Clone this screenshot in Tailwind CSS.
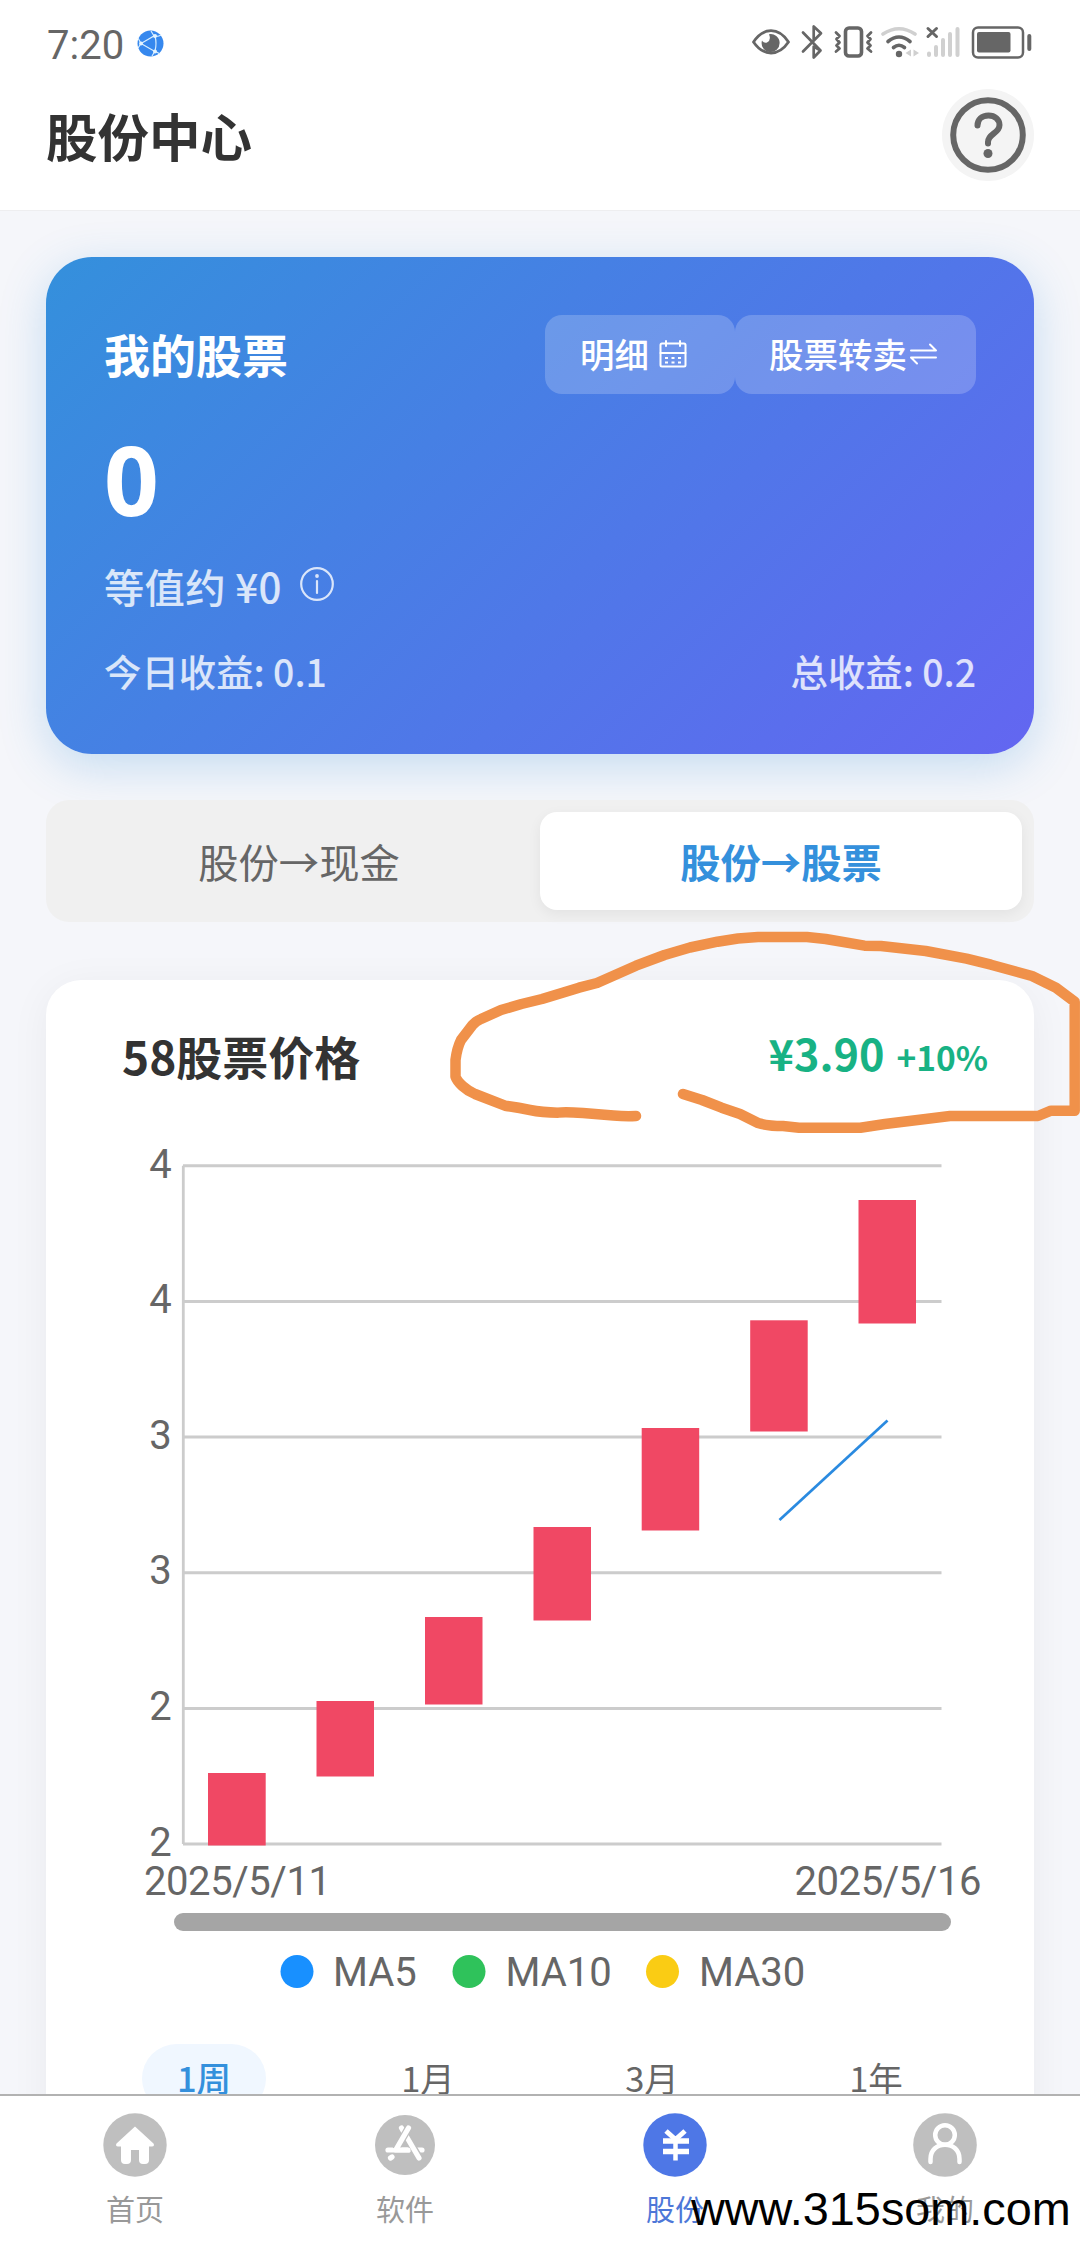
<!DOCTYPE html>
<html lang="zh-CN">
<head>
<meta charset="utf-8">
<title>股份中心</title>
<script src="https://cdn.jsdelivr.net/npm/@tailwindcss/browser@4"></script>
</head>
<body class="bg-[#f5f6fa]">
<div class="relative flex h-[2244px] w-[1080px] flex-col overflow-hidden bg-[#f5f6fa] font-['Noto_Sans_CJK_SC',sans-serif] text-[#333]">

  <header class="h-[211px] shrink-0 border-b border-[#eeeef0] bg-white">
    <div class="flex h-[84px] items-center justify-between pr-[48px] pl-[47px]">
      <div class="flex items-center gap-[13px] pt-[7px]">
        <span class="font-[Roboto,sans-serif] text-[40px] leading-[48px] text-[#666]">7:20</span>
        <svg class="-mt-[4px] h-[27px] w-[27px]" viewBox="0 0 27 27">
          <circle cx="13.5" cy="13.5" r="13" fill="#3688ee"/>
          <g stroke="#d9efff" stroke-width="1.2" fill="none"><path d="M4 13.5 17 6Q21 7 24 5M4 13.5 17 21Q20 22 23 24M18 6Q20 13.5 18 21M17 6 14 1M18 21 15 26M4 13.5 1 8M4 13.5 1 18"/></g>
          <g fill="#e4f4ff"><circle cx="4" cy="13.5" r="1.9"/><circle cx="18" cy="6" r="2"/><circle cx="18" cy="21.5" r="2"/></g>
        </svg>
      </div>
      <svg class="h-[40px] w-[280px]" viewBox="752 22 280 40" fill="none" stroke="#666" stroke-linecap="round" stroke-linejoin="round">
        <path d="M753.5 42Q761 30.700 771 30.700T788.500 42Q781 53 771 53T753.500 42Z" stroke-width="2.800"/>
        <path d="M769 34.200A9 9 0 1 1 762 40.500Q764 43.500 767 42.500Q771.500 40 769 34.200Z" fill="#666" stroke="none"/>
        <path d="M803 32.500 820.500 50.500 813.700 57.500V46.500L820.500 50.500M803 51.500 821 33.300 813.700 26.500V40" stroke-width="2.700"/>
        <rect x="845.500" y="28" width="16" height="28" rx="3.500" stroke-width="3.600"/>
        <path d="M836 32.500l3.500 3.500-3 3 3 3.500-3 3 3 3-3.500 3M871 32.500l-3.500 3.500 3 3-3 3.500 3 3-3 3 3.500 3" stroke-width="2.800"/>
        <path d="M883 34Q899 23.500 915 34" stroke="#d0d0d0" stroke-width="3.600"/>
        <path d="M888 41.500Q899 32.500 910 41.500M893.500 47.500Q899 43 904.500 47.500" stroke-width="3.600"/>
        <circle cx="899" cy="54" r="3.200" fill="#666" stroke="none"/>
        <path d="M911 49.500v7l-5.500-3.500zM913.500 49.500v7l5.500-3.500z" fill="#d0d0d0" stroke="none"/>
        <path d="M929 53.500v1.500M936 47v8M943 40v15M950 34v21M957.500 29v26" stroke="#d0d0d0" stroke-width="4"/>
        <path d="M928 28.500l8.500 8M936.500 28.500l-8.500 8" stroke-width="3"/>
        <rect x="973" y="27.500" width="50" height="30" rx="5" stroke-width="2.500"/>
        <rect x="977" y="32" width="33.500" height="20.500" rx="2" fill="#666" stroke="none"/>
        <path d="M1029.300 36v13" stroke-width="4"/>
      </svg>
    </div>
    <div class="flex h-[101px] items-center justify-between pr-[46px] pl-[46px]">
      <h1 class="text-[51.500px] leading-[60px] font-bold">股份中心</h1>
      <div class="flex h-[92px] w-[92px] items-center justify-center rounded-full bg-[#f4f4f4]">
        <svg class="h-[76px] w-[76px]" viewBox="-38 -38 76 76" fill="none" stroke="#666" stroke-linecap="round">
          <circle r="34.800" stroke-width="6"/>
          <path d="M-10.500 -9.500C-10.500 -15.500 -6 -19.500 .5 -19.500C7 -19.500 11.500 -15.500 11.500 -10C11.500 -1.500 0 -1.500 0 7V8.500" stroke-width="6"/>
          <circle cx="0" cy="18.500" r="4.500" fill="#666" stroke="none"/>
        </svg>
      </div>
    </div>
  </header>

  <section class="mx-[46px] mt-[46px] flex h-[497px] shrink-0 flex-col rounded-[46px] bg-[linear-gradient(135deg,#3490dc,#6366f1)] px-[58px] text-white shadow-[0_12px_46px_rgba(52,144,220,0.25)]">
    <div class="mt-[58px] flex h-[79px] items-center justify-between">
      <h2 class="pb-[4px] text-[46px] leading-[60px] font-bold">我的股票</h2>
      <div class="flex text-[34.5px] font-medium">
        <div class="flex h-[79px] w-[190px] items-center rounded-[17px] bg-white/20 pl-[35px]">
          <span class="pb-[3px] leading-[50px]">明细</span>
          <svg class="ml-[9px] -mt-[2px] h-[30px] w-[30px]" viewBox="0 0 30 30" fill="none" stroke="#fff" stroke-width="2" stroke-linecap="round">
            <rect x="2.500" y="4.500" width="25" height="23" rx="1.500"/><path d="M2.500 14h25M8 2v5M22 2v5"/>
            <path d="M7 19h3M13.500 19h3M20 19h3M7 23.500h3M13.500 23.500h3M20 23.500h3" stroke-linecap="butt" stroke-width="2"/>
          </svg>
        </div>
        <div class="flex h-[79px] w-[241px] items-center rounded-[17px] bg-white/20 pl-[34px]">
          <span class="pb-[3px] leading-[50px]">股票转卖</span>
          <svg class="ml-[2px] -mt-[2px] h-[24px] w-[30px]" viewBox="0 0 30 24" fill="none" stroke="#fff" stroke-width="2" stroke-linecap="round" stroke-linejoin="round"><path d="M2 8.500H27L21 2.500M27 15.500H2L8 21.500"/></svg>
        </div>
      </div>
    </div>
    <div class="mt-[35px] font-['Noto_Sans',sans-serif] text-[96px] leading-[100px] font-bold">0</div>
    <div class="mt-[29px] flex h-[56px] items-center text-[40.3px] text-white/80">
      <span class="font-medium whitespace-pre leading-[56px] tracking-[0.3px]">等值约 ¥0</span>
      <svg class="-mt-[4px] ml-[17px] h-[36px] w-[36px]" viewBox="-18 -18 36 36" fill="none" stroke="currentColor" stroke-width="2.200" stroke-linecap="round"><circle r="15.800"/><path d="M0 -3V9"/><circle cy="-8" r="1.900" fill="currentColor" stroke="none"/></svg>
    </div>
    <div class="mt-[29px] flex justify-between text-[37.4px] leading-[56px] font-medium text-white/80"><span>今日收益: 0.1</span><span>总收益: 0.2</span></div>
  </section>

  <nav class="mx-[46px] mt-[46px] grid h-[122px] shrink-0 grid-cols-2 rounded-[23px] bg-[#f0f0f0] p-[12px] text-center text-[40.3px] leading-[97px]">
    <div class="text-[#666]">股份→现金</div>
    <div class="rounded-[17px] bg-white font-bold text-[#3490dc] shadow-[0_4px_14px_rgba(0,0,0,0.06)]">股份→股票</div>
  </nav>

  <section class="mx-[46px] mt-[58px] flex h-[1240px] shrink-0 flex-col rounded-[35px] bg-white shadow-[0_6px_40px_rgba(0,0,0,0.05)]">
    <div class="mt-[43px] flex h-[64px] items-center justify-between pr-[46px] pl-[76px]">
      <h2 class="text-[46px] leading-[64px] font-bold">58股票价格</h2>
      <div class="flex items-baseline gap-[12px] pb-[2px] font-bold text-[#18b284]"><span class="text-[43.2px] leading-[60px]">¥3.90</span><span class="text-[33.500px] leading-[60px]">+10%</span></div>
    </div>
    <svg class="mt-[33px] h-[900px] w-[988px] shrink-0" viewBox="46 1120 988 900" font-family="Roboto,sans-serif" font-size="40" fill="#666">
      <g stroke="#ccc" stroke-width="3" fill="none">
        <path d="M183 1165.700H941.500M183 1301.400H941.500M183 1437.100H941.500M183 1572.800H941.500M183 1708.400H941.500M183 1844H941.500"/>
        <path d="M183.300 1165.700V1844" stroke-width="2.800"/>
      </g>
      <g text-anchor="middle">
        <text x="160.500" y="1178">4</text><text x="160.500" y="1313">4</text><text x="160.500" y="1448.500">3</text><text x="160.500" y="1583.500">3</text><text x="160.500" y="1720">2</text><text x="160.500" y="1855.500">2</text>
      </g>
      <g fill="#f04864">
        <rect x="208" y="1773" width="57.700" height="72.500"/><rect x="316.500" y="1701" width="57.500" height="75.500"/><rect x="425" y="1617" width="57.500" height="87.500"/><rect x="533.500" y="1527" width="57.500" height="93.500"/><rect x="641.700" y="1428" width="57.500" height="102.500"/><rect x="750.200" y="1320.300" width="57.500" height="111.200"/><rect x="858.500" y="1200" width="57.500" height="123.500"/>
      </g>
      <path d="M779.500 1520 887.500 1420.500" stroke="#2a8ae0" stroke-width="2.700"/>
      <text x="144" y="1895" textLength="187">2025/5/11</text><text x="794.500" y="1895" textLength="187">2025/5/16</text>
      <rect x="174" y="1913" width="777" height="18" rx="9" fill="#a5a5a5"/>
      <circle cx="297" cy="1971.500" r="16.500" fill="#1890ff"/><circle cx="469" cy="1971.500" r="16.500" fill="#2fc25b"/><circle cx="662.500" cy="1971.500" r="16.500" fill="#facc14"/>
      <text x="333" y="1985.700">MA5</text><text x="505.500" y="1985.700">MA10</text><text x="699" y="1985.700">MA30</text>
    </svg>
    <div class="mx-[46px] mt-[24px] grid grid-cols-4 justify-items-center text-[34.5px] leading-[67px] text-[#666]">
      <div class="h-[69px] w-[124px] rounded-full bg-[#f0f7ff] text-center font-medium text-[#3490dc]">1周</div>
      <div>1月</div><div>3月</div><div>1年</div>
    </div>
  </section>

  <!-- bottom tab bar -->
  <nav class="absolute bottom-0 left-0 grid h-[150px] w-full grid-cols-4 border-t-2 border-[#b2b2b2] bg-white text-center text-[29px] leading-[40px] text-[#999]">
    <div class="flex flex-col items-center pt-[17px]">
      <svg class="h-[64px] w-[64px]" viewBox="-32 -32 64 64"><circle r="31.700" fill="#bfbfbf"/><path d="M0 -18.500 18.500 -1.500Q20 1 17 1.500H14V15Q14 19 10 19H8Q4 19 4 15V5H-4V15Q-4 19 -8 19H-10Q-14 19 -14 15V1.500H-17Q-20 1 -18.500 -1.500Z" fill="#fff"/></svg>
      <span class="mt-[11px]">首页</span>
    </div>
    <div class="flex flex-col items-center pt-[17px]">
      <svg class="h-[64px] w-[64px]" viewBox="-32 -32 64 64" fill="none" stroke="#fff" stroke-width="5.200" stroke-linecap="round">
        <circle r="30" fill="#bfbfbf" stroke="none"/>
        <path d="M-17 5H3.500M12 5H17M-13 12-14.500 13"/>
        <path d="M-3.500 -17 14 13" stroke="#bfbfbf" stroke-width="8"/>
        <path d="M-3.500 -17 14 13"/>
        <path d="M3.500 -17-9 4.500" stroke="#bfbfbf" stroke-width="7.500" stroke-linecap="butt"/>
        <path d="M3.500 -17-9 4.500M-9 5H3"/>
      </svg>
      <span class="mt-[11px]">软件</span>
    </div>
    <div class="flex flex-col items-center pt-[17px] text-[#4d77d8]">
      <svg class="h-[64px] w-[64px]" viewBox="-32 -32 64 64" fill="none" stroke="#fff"><circle r="31.700" fill="#4e77e6" stroke="none"/><path d="M-9 -14 .5 -5.500 10 -14" stroke-width="5"/><path d="M-12 -4H14M-12 6.500H14" stroke-width="5.500"/><path d="M.5 -7V15.500" stroke-width="4.500"/></svg>
      <span class="mt-[11px]">股份</span>
    </div>
    <div class="flex flex-col items-center pt-[17px]">
      <svg class="h-[64px] w-[64px]" viewBox="-32 -32 64 64" fill="none" stroke="#fff" stroke-width="4.500" stroke-linecap="round"><circle r="31.800" fill="#bfbfbf" stroke="none"/><circle cy="-10" r="9.800"/><path d="M-14.500 17V14C-14.500 5 -8 -.2 0 -.2S14.500 5 14.500 14V17"/></svg>
      <span class="mt-[11px]">我的</span>
    </div>
  </nav>

  <!-- hand-drawn highlight over the price -->
  <svg class="pointer-events-none absolute top-[920px] left-0 h-[220px] w-[1080px]" viewBox="0 920 1080 220" fill="none" stroke="#f0914a" stroke-width="10.500" stroke-linecap="round" stroke-linejoin="round">
    <path d="M636 1116Q625 1116.500 613.500 1115.500T583 1113 558 1112.700Q542 1112.500 530 1110T505 1105.700L475 1094Q468 1091 462.500 1086T455.500 1076.500V1060Q457 1048 461 1040L472.500 1025Q476 1021 481 1019L501 1010 521.500 1004 542 999 579 987.700 597 983 636 965.700 664.500 955 690 947.500 717.500 941.700 738 938.500 758 937H807L825.700 939 864.500 945.700 881 946 925.700 951 966.500 958.700 991 964.700 1032 976 1056 987.700 1074.700 1001.700V1110.700H1051L1038 1116H950L925.700 1119 885 1124 860.400 1127.700H799L783 1126Q768 1126 758 1123L740 1114 721.600 1107.700 702 1100 683 1094"/>
  </svg>

  <div class="absolute top-[2182px] left-[691px] font-['Liberation_Sans',Arial,sans-serif] text-[46.800px] leading-[54px] text-black">www.315som.com</div>
</div>
</body>
</html>
